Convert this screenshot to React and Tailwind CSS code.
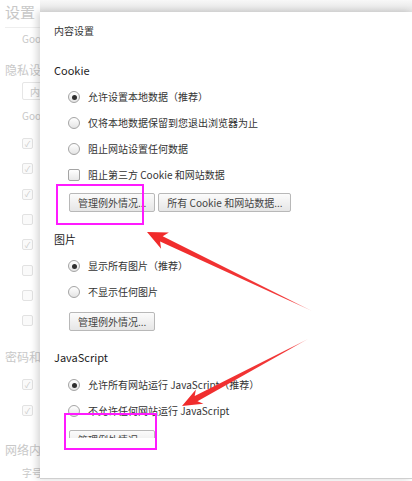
import React from "react";

const fontCls = "font-[family-name:'Noto_Sans_CJK_SC','Liberation_Sans',sans-serif]";

const BgCheck = ({ checked }) => (
  <div className="flex h-[25.3px] items-center pl-[22px]">
    <div className="flex h-[11px] w-[11px] items-center justify-center rounded-[2px] border border-[#e2e2e2] bg-[#fafafa] text-[8px] leading-none text-[#c9c9c9]">
      {checked ? "✓" : ""}
    </div>
  </div>
);

const Radio = ({ checked, label }) => (
  <div className="flex h-[26px] items-center pl-[14px]">
    <div className="flex h-[12px] w-[12px] items-center justify-center rounded-full border border-[#a4a4a4] bg-gradient-to-b from-white to-[#e4e4e4]">
      {checked && <div className="h-[5px] w-[5px] rounded-full bg-[#2e2e2e]" />}
    </div>
    <span className="ml-[8px] text-[10px] leading-none text-[#333]">{label}</span>
  </div>
);

const Check = ({ label }) => (
  <div className="flex h-[26px] items-center pl-[14px]">
    <div className="h-[12px] w-[12px] rounded-[2px] border border-[#a4a4a4] bg-gradient-to-b from-white to-[#e8e8e8]" />
    <span className="ml-[8px] text-[10px] leading-none text-[#333]">{label}</span>
  </div>
);

const Btn = ({ children }) => (
  <button className="h-[19px] rounded-[2px] border border-[#b8b8b8] bg-gradient-to-b from-[#fbfbfb] to-[#e6e6e6] px-[8px] text-[10px] leading-none whitespace-nowrap text-[#444]">
    {children}
  </button>
);

const Heading = ({ children, className = "" }) => (
  <div className={`h-[14px] text-[11px] leading-[14px] text-[#222] ${className}`}>{children}</div>
);

export default function App() {
  return (
    <div className={`relative flex h-[481px] w-[412px] overflow-hidden bg-white ${fontCls}`}>
      {/* faded settings page behind the dialog */}
      <div className="flex w-[40px] shrink-0 flex-col overflow-hidden whitespace-nowrap text-[#c8c8c8]">
        <div className="mt-[4px] h-[16px] pl-[5px] text-[15px] leading-[16px]">设置</div>
        <div className="ml-[5px] h-[8px] w-[60px] border-b border-[#eeeeee]" />
        <div className="mt-[5px] h-[12px] pl-[22px] text-[10px] leading-[12px]">Google Chrome</div>
        <div className="mt-[18px] h-[14px] pl-[5px] text-[12px] leading-[14px]">隐私设置</div>
        <div className="mt-[5px] ml-[22px] flex h-[18px] w-[60px] items-center rounded-[2px] border border-[#e6e6e6] pl-[7px] text-[10px]">
          内容设置
        </div>
        <div className="mt-[10px] h-[12px] pl-[22px] text-[10px] leading-[12px]">Google Chrome</div>
        <div className="mt-[9px]">
          <BgCheck checked />
          <BgCheck checked />
          <BgCheck checked />
          <BgCheck />
          <BgCheck checked />
          <BgCheck />
          <BgCheck />
          <BgCheck />
        </div>
        <div className="mt-[16.6px] h-[14px] pl-[5px] text-[12px] leading-[14px]">密码和表单</div>
        <div className="mt-[8px]">
          <div className="h-[26px]">
            <BgCheck checked />
          </div>
          <div className="h-[26px]">
            <BgCheck checked />
          </div>
        </div>
        <div className="mt-[19px] h-[14px] pl-[5px] text-[12px] leading-[14px]">网络内容</div>
        <div className="mt-[10px] h-[12px] pl-[22px] text-[10px] leading-[12px]">字号</div>
      </div>

      {/* dialog */}
      <div className="flex flex-1 flex-col">
        <div className="h-[12px] bg-gradient-to-b from-[#f8f8f8] to-[#e2e2e2]" />
        <div className="h-[467px] border-b border-[#cfcfcf] bg-white shadow-[-3px_0_7px_rgba(0,0,0,0.16)]">
          <div className="h-[426px] overflow-hidden px-[14px]">
            <div className="mt-[12px] h-[14px] text-[10px] leading-[14px] text-[#333]">内容设置</div>

            <Heading className="mt-[25px]">Cookie</Heading>
            <div className="mt-[7px]">
              <Radio checked label="允许设置本地数据（推荐）" />
              <Radio label="仅将本地数据保留到您退出浏览器为止" />
              <Radio label="阻止网站设置任何数据" />
              <Check label="阻止第三方 Cookie 和网站数据" />
            </div>
            <div className="mt-[5px] flex gap-[3px] pl-[15px]">
              <Btn>管理例外情况...</Btn>
              <Btn>所有 Cookie 和网站数据...</Btn>
            </div>

            <Heading className="mt-[20px]">图片</Heading>
            <div className="mt-[7px]">
              <Radio checked label="显示所有图片（推荐）" />
              <Radio label="不显示任何图片" />
            </div>
            <div className="mt-[7px] flex pl-[15px]">
              <Btn>管理例外情况...</Btn>
            </div>

            <Heading className="mt-[19px]">JavaScript</Heading>
            <div className="mt-[8px]">
              <Radio checked label="允许所有网站运行 JavaScript（推荐）" />
              <Radio label="不允许任何网站运行 JavaScript" />
            </div>
            <div className="mt-[6px] flex pl-[15px]">
              <Btn>管理例外情况...</Btn>
            </div>
          </div>
        </div>
      </div>

      {/* annotations */}
      <div className="absolute left-[56px] top-[184px] h-[41px] w-[88px] border-2 border-[#ff1aff]" />
      <div className="absolute left-[64px] top-[413px] h-[37px] w-[93px] border-2 border-[#ff1aff]" />
      <svg className="pointer-events-none absolute left-0 top-0" width="412" height="481" viewBox="0 0 412 481">
        <defs>
          <linearGradient id="a1" x1="147" y1="232" x2="312" y2="311" gradientUnits="userSpaceOnUse">
            <stop offset="0" stopColor="#f02a2a" />
            <stop offset="0.85" stopColor="#f23a3a" />
            <stop offset="1" stopColor="#f7a0a0" />
          </linearGradient>
          <linearGradient id="a2" x1="182" y1="406" x2="308" y2="339" gradientUnits="userSpaceOnUse">
            <stop offset="0" stopColor="#f02a2a" />
            <stop offset="0.85" stopColor="#f23a3a" />
            <stop offset="1" stopColor="#f7a0a0" />
          </linearGradient>
        </defs>
        <polygon
          fill="url(#a1)"
          points="147,232 168.9,232.5 162.7,236.2 312,311 160.1,241.6 161.1,248.7"
        />
        <polygon
          fill="url(#a2)"
          points="182,406 195.9,389.5 194.7,395.9 308,339 197.5,401.2 203.4,403.7"
        />
      </svg>
    </div>
  );
}
